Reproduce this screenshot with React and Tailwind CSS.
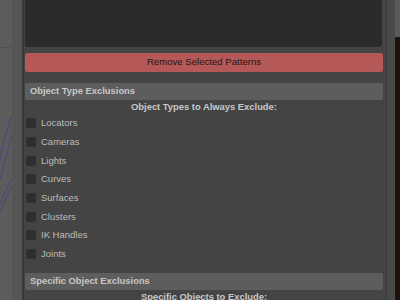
import React from "react";

const types = ["Locators", "Cameras", "Lights", "Curves", "Surfaces", "Clusters", "IK Handles", "Joints"];

const FrameHeader = ({ title }) => (
  <div className="h-[17px] bg-[#5d5d5d] rounded-[2px] flex items-center pl-[5px] text-[9.4px] font-bold text-[#c8c8c8]">
    {title}
  </div>
);

const Check = ({ label }) => (
  <div className="h-[18.7px] flex items-center gap-[5px] pl-[1px]">
    <div className="w-[10px] h-[10px] rounded-[2px] bg-[#2e2e2e]" />
    <span className="text-[9.5px] text-[#bdbdbd]">{label}</span>
  </div>
);

export default function App() {
  return (
    <div
      className="w-[400px] h-[300px] flex overflow-hidden bg-[#444444]"
      style={{ fontFamily: '"Liberation Sans", Arial, sans-serif' }}
    >
      {/* viewport edge on the left */}
      <div className="w-[12px] h-full bg-[#5c5c5c] relative">
        <div className="absolute left-0 right-0 top-[47px] h-px bg-[#525252]" />
        <svg className="absolute left-0 top-0" width="12" height="300" viewBox="0 0 12 300">
          <g fill="none" stroke="#4a3c86" strokeWidth="0.8">
            <path d="M12 115 L4 140 L0 160" />
            <path d="M11 118 C8 124 9 130 12 128" />
            <path d="M12 135 L5 160 L0 180" />
            <path d="M12 178 L3 196 L0 204" />
            <path d="M12 186 L4 202 L0 212" />
          </g>
        </svg>
      </div>
      <div className="w-[12px] h-full bg-[#555555] border-r-2 border-[#383838]" />

      {/* main panel */}
      <div className="w-[362px] h-full bg-[#444444] pl-[1px] pr-[3px] flex flex-col">
        <div className="h-[47px] bg-[#2b2b2b] rounded-b-[3px] mr-[1px] shrink-0" />
        <div className="mt-[6px] h-[19px] shrink-0 bg-[#b45858] rounded-[2px] flex items-center justify-center text-[9.6px] text-[#2a1515]">
          Remove Selected Patterns
        </div>
        <div className="mt-[11px] shrink-0">
          <FrameHeader title="Object Type Exclusions" />
        </div>
        <div className="h-[14px] shrink-0 flex items-center justify-center text-[9.4px] font-bold text-[#c8c8c8]">
          Object Types to Always Exclude:
        </div>
        <div className="flex flex-col shrink-0">
          {types.map((t) => (
            <Check key={t} label={t} />
          ))}
        </div>
        <div className="mt-[9.4px] shrink-0">
          <FrameHeader title="Specific Object Exclusions" />
        </div>
        <div className="h-[14px] shrink-0 flex items-center justify-center text-[9.4px] font-bold text-[#c8c8c8]">
          Specific Objects to Exclude:
        </div>
      </div>

      {/* scroll strip on the right */}
      <div className="w-[9px] h-full bg-[#4a4a4a] border-l border-[#3c3c3c]" />
      <div className="w-[5px] h-full flex flex-col">
        <div className="h-[37px] bg-[#595959]" />
        <div className="flex-1 bg-[#1f120b]" />
      </div>
    </div>
  );
}
